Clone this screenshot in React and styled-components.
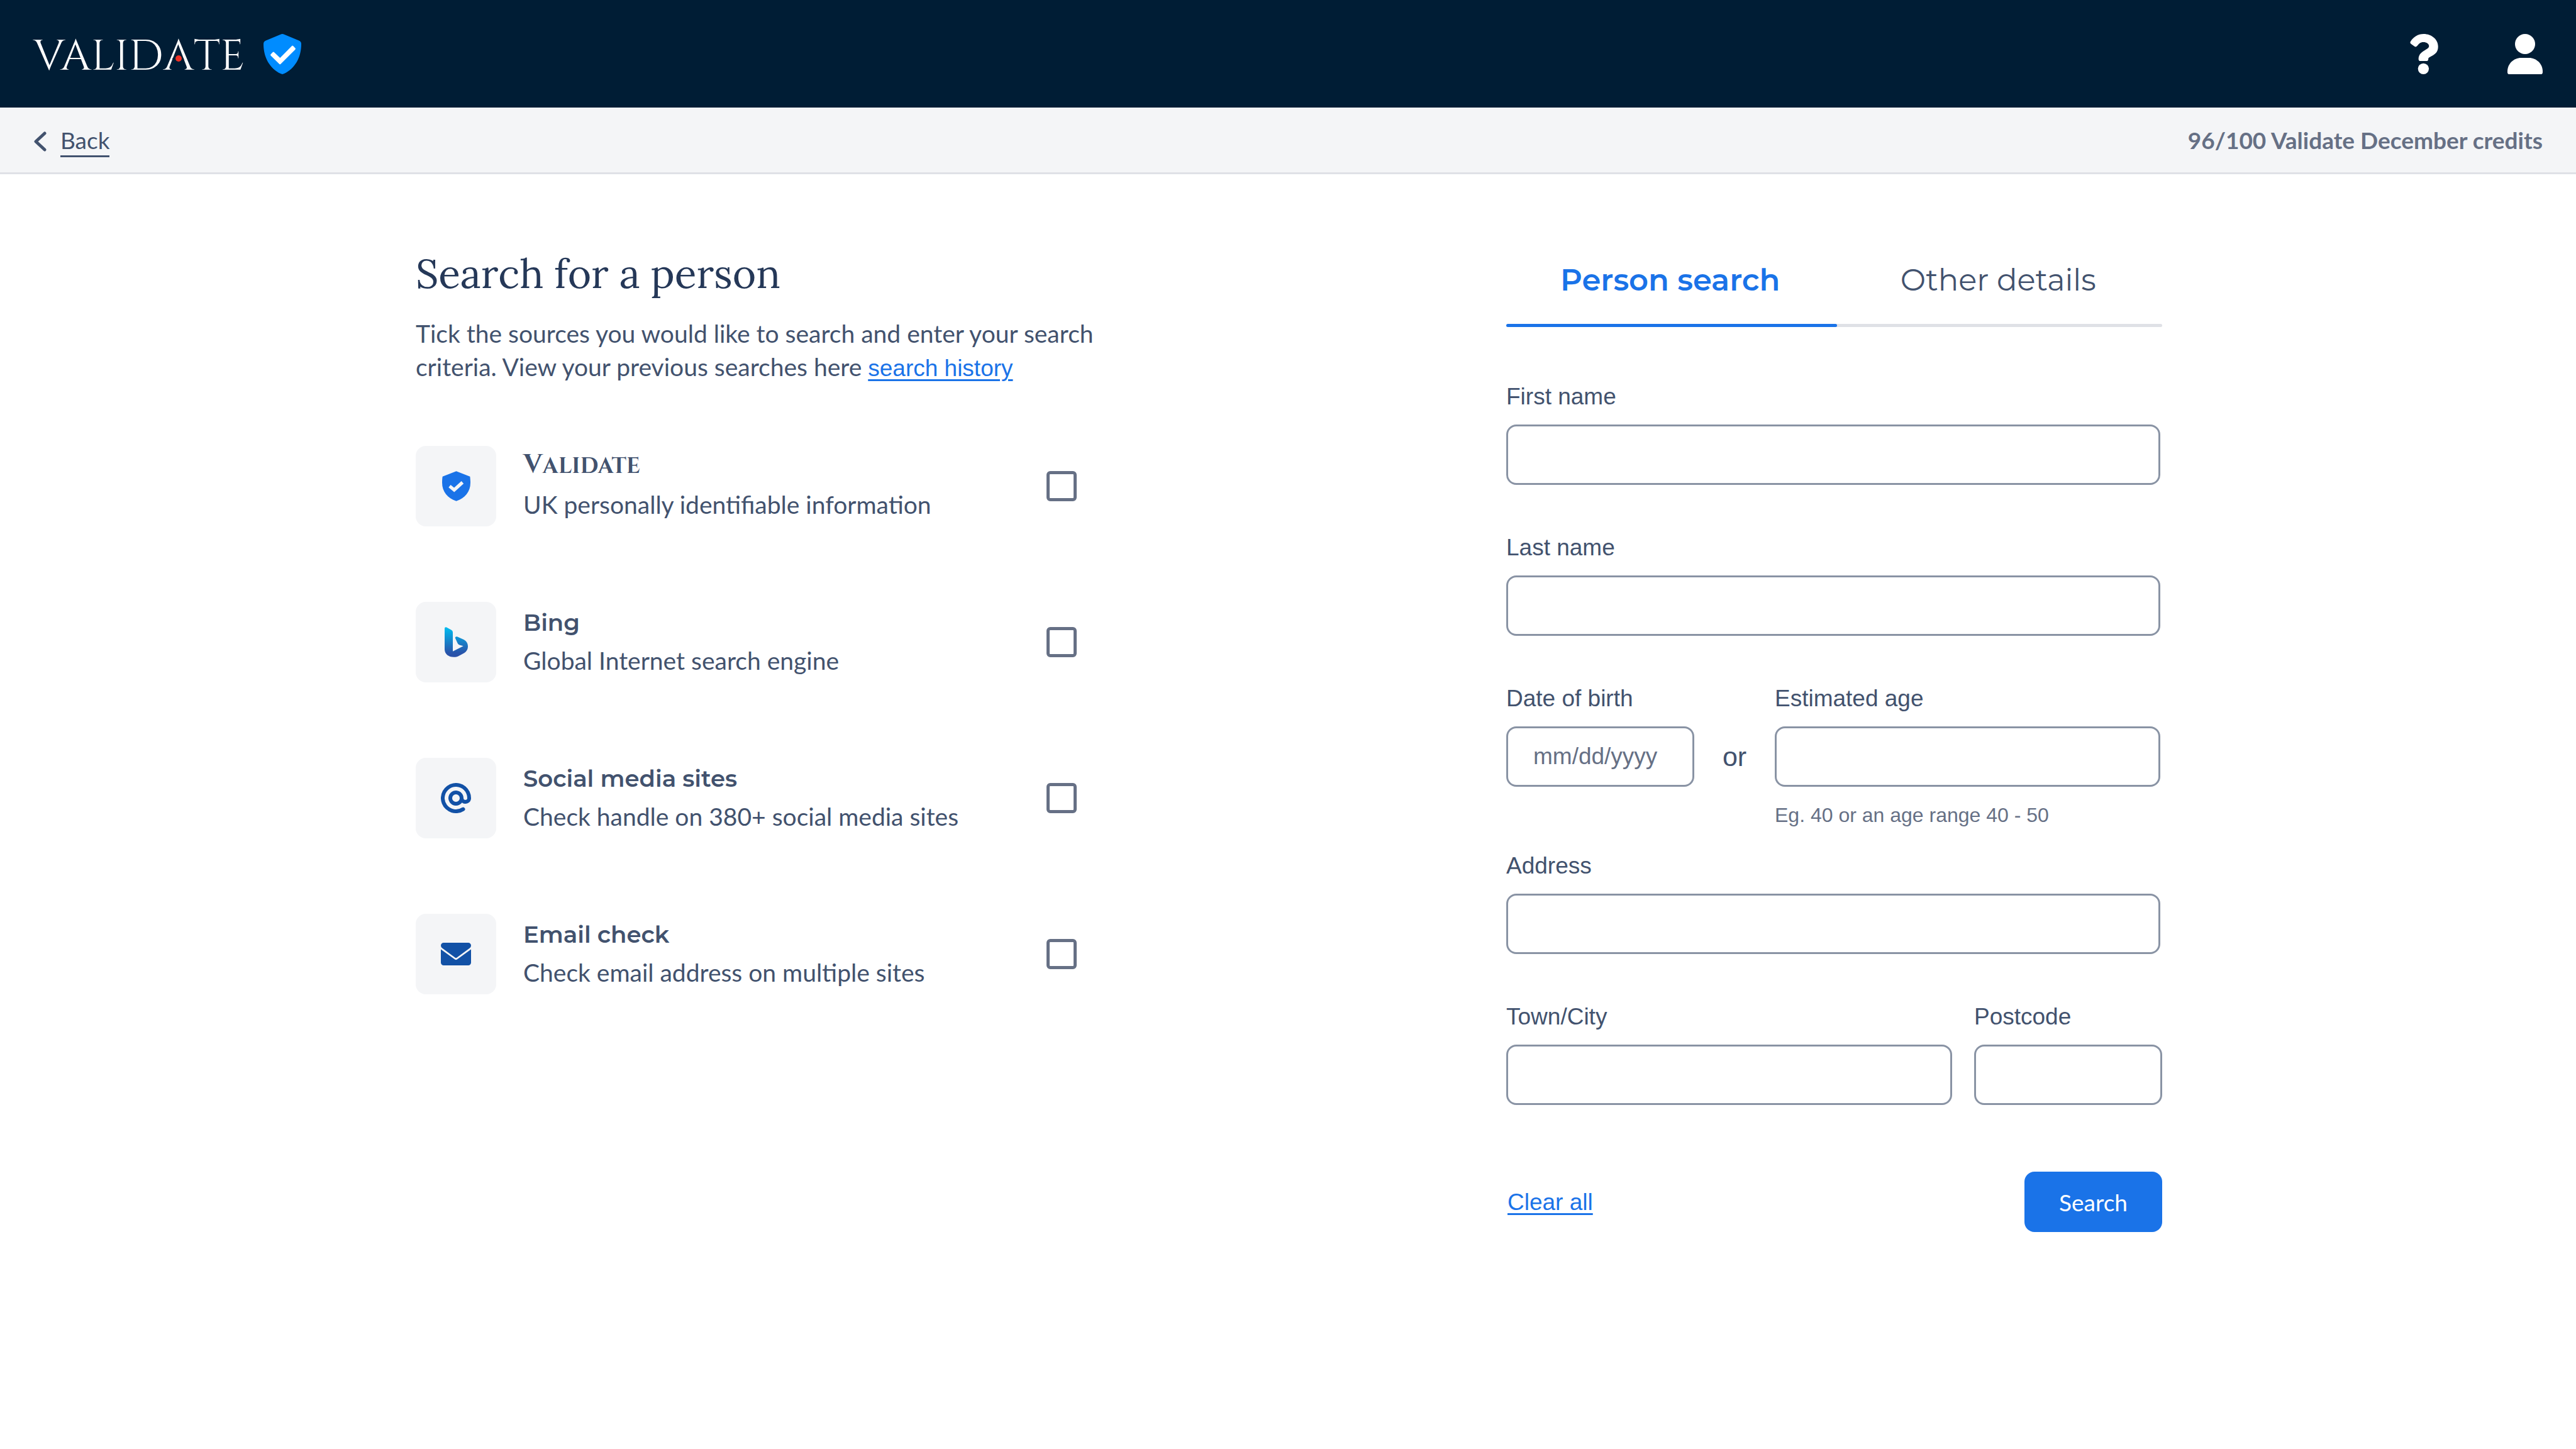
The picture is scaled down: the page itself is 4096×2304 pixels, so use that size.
import React from "react";
import styled, { createGlobalStyle } from "styled-components";

const color = {
  navy: "#001d35",
  heading: "#253858",
  text: "#42526e",
  muted: "#667085",
  border: "#8993a4",
  line: "#dfe1e6",
  surface: "#f4f5f7",
  blue: "#1a73e8",
  deepBlue: "#1251a6",
};

const font = {
  body: '"Lato", "Open Sans", sans-serif',
  ui: '"Liberation Sans", Arial, sans-serif',
  brand: '"Cinzel", "Liberation Serif", "Times New Roman", serif',
  heading: '"Lora", "Liberation Serif", serif',
  title: '"Montserrat", "Inter", sans-serif',
};

const GlobalStyle = createGlobalStyle`
  *, *::before, *::after { box-sizing: border-box; }
  body {
    margin: 0;
    background: #ffffff;
    color: ${color.text};
    font: 37px/53px ${font.body};
  }
  h1, h2, p { margin: 0; }
  button, input { font: inherit; color: inherit; }
  svg { display: block; }
`;

const Header = styled.header`
  display: flex;
  align-items: center;
  justify-content: space-between;
  height: 171px;
  padding: 0 53px;
  background: ${color.navy};
  color: #ffffff;
`;

const Brand = styled.a`
  display: flex;
  align-items: center;
  gap: 30px;
  color: inherit;
  text-decoration: none;
`;

const Wordmark = styled.span`
  padding-top: 10px;
  font: 500 68px/80px ${font.brand};
`;

/* The second A of the wordmark has a red dot in place of its crossbar. */
const DottedA = styled.span`
  position: relative;
  &::before {
    content: "";
    position: absolute;
    left: 14px;
    top: 47px;
    width: 19px;
    height: 4px;
    background: ${color.navy};
    clip-path: polygon(5% 0, 95% 0, 100% 100%, 0 100%);
  }
  &::after {
    content: "";
    position: absolute;
    left: 19px;
    top: 43px;
    width: 10px;
    height: 10px;
    border-radius: 50%;
    background: #ee3024;
  }
`;

const HeaderActions = styled.nav`
  display: flex;
  gap: 110px;
`;

const IconButton = styled.button`
  padding: 0;
  border: 0;
  background: none;
  cursor: pointer;
`;

const SubBar = styled.div`
  display: flex;
  align-items: center;
  justify-content: space-between;
  height: 106px;
  padding: 0 53px;
  background: ${color.surface};
  border-bottom: 3px solid ${color.line};
`;

const BackLink = styled.a`
  display: flex;
  align-items: center;
  gap: 22px;
  padding-top: 4px;
  color: ${color.text};
  text-decoration: none;
`;

const BackText = styled.span`
  line-height: 48px;
  border-bottom: 3px solid currentColor;
`;

const Credits = styled.strong`
  font-weight: 700;
  color: ${color.muted};
`;

const Main = styled.main`
  display: flex;
  justify-content: space-between;
  gap: 80px;
  max-width: 2780px;
  margin: 0 auto;
  padding: 118px 0 118px 3px;
`;

const Sources = styled.section`
  flex: 0 1 1088px;
  font-size: 39px;
`;

const Heading = styled.h1`
  margin-bottom: 29px;
  font: 400 64px/80px ${font.heading};
  color: ${color.heading};
`;

const TextLink = styled.a`
  font-family: ${font.ui};
  font-size: 37px;
  color: ${color.blue};
  text-decoration: underline;
  text-decoration-thickness: 3px;
  text-underline-offset: 5px;
`;

const SourceList = styled.ul`
  display: grid;
  gap: 120px;
  max-width: 1051px;
  margin: 97px 0 0;
  padding: 0;
  list-style: none;
`;

const SourceRow = styled.label`
  display: flex;
  align-items: center;
  gap: 43px;
  cursor: pointer;
`;

const Tile = styled.span`
  display: grid;
  place-items: center;
  flex: none;
  width: 128px;
  height: 128px;
  border-radius: 16px;
  background: ${color.surface};
`;

const SourceText = styled.span`
  display: grid;
  flex: 1;
  align-self: flex-start;
  gap: 8px;
  padding-top: 6px;
`;

const SourceName = styled.span`
  display: block;
  font: 600 37px/53px ${(p) => (p.$brand ? font.brand : font.title)};
  ${(p) =>
    p.$brand &&
    `
    font-size: 35px;
    &::first-letter {
      font-size: 42px;
      line-height: 40px;
    }
  `}
`;

const Checkbox = styled.input`
  appearance: none;
  flex: none;
  width: 48px;
  height: 48px;
  margin: 0;
  border: 5px solid ${color.muted};
  border-radius: 6px;
  background: #ffffff;
  &:checked { background: ${color.blue}; }
`;

const SearchPanel = styled.section`
  flex: 0 1 1043px;
`;

const TabList = styled.div`
  display: grid;
  grid-template-columns: 1fr 1fr;
  margin-bottom: 89px;
`;

const Tab = styled.button`
  position: relative;
  z-index: ${(p) => (p.$active ? 1 : 0)};
  padding: 22px 0 0;
  border: 0;
  background: none;
  font: ${(p) => (p.$active ? 600 : 400)} 48px/56px ${font.title};
  color: ${(p) => (p.$active ? color.blue : color.text)};
  cursor: pointer;
  &::after {
    content: "";
    display: block;
    height: 5px;
    margin-top: 42px;
    margin-right: ${(p) => (p.$active ? -4 : 0)}px;
    border-radius: ${(p) => (p.$active ? "3px" : "0 3px 3px 0")};
    background: ${(p) => (p.$active ? color.blue : color.line)};
  }
`;

const Form = styled.form`
  display: grid;
  gap: 40px;
  font-family: ${font.ui};
`;

const Row = styled.div`
  display: flex;
  align-items: flex-start;
  gap: ${(p) => p.$gap || 0}px;
  margin-right: ${(p) => (p.$inset ? 3 : 0)}px;
`;

const FieldBox = styled.div`
  display: flex;
  flex-direction: column;
  flex: ${(p) => (p.$width ? `0 0 ${p.$width}px` : "1")};
  min-width: 0;
  padding-bottom: ${(p) => (p.$hinted ? 0 : 38)}px;
`;

const Label = styled.label`
  margin-bottom: 22px;
  line-height: 44px;
`;

const TextInput = styled.input`
  width: 100%;
  height: 96px;
  padding: 0 40px;
  border: 3px solid ${color.border};
  border-radius: 16px;
  background: #ffffff;
  &::placeholder { color: ${color.muted}; opacity: 1; }
`;

const Hint = styled.p`
  margin-top: 26px;
  font-size: 32px;
  line-height: 38px;
  color: ${color.muted};
`;

const Or = styled.span`
  flex: 0 0 128px;
  padding-top: 66px;
  font-size: 43px;
  line-height: 96px;
  text-align: center;
`;

const Actions = styled.div`
  display: flex;
  align-items: center;
  justify-content: space-between;
  margin-top: 28px;
`;

const ClearButton = styled.button`
  padding: 0 2px;
  border: 0;
  background: none;
  color: ${color.blue};
  text-decoration: underline;
  text-decoration-thickness: 3px;
  text-underline-offset: 5px;
  cursor: pointer;
`;

const SubmitButton = styled.button`
  height: 96px;
  padding: 0 55px;
  border: 0;
  border-radius: 16px;
  background: ${color.blue};
  color: #ffffff;
  font-family: ${font.body};
  cursor: pointer;
`;

const BrandShield = () => (
  <svg width="60" height="64" viewBox="0 0 270 288" aria-hidden="true">
    <path
      fill="#008cff"
      d="M122 3Q135-3 148 3L256 48Q270 55 270 72C270 168 226 246 148 284Q135 291 122 284C44 246 0 168 0 72Q0 55 14 48Z"
    />
    <path
      fill="#fff"
      stroke="#fff"
      strokeWidth="14"
      strokeLinejoin="round"
      d="M71 136 118 181 207 91 222 106 118 210 57 150Z"
    />
  </svg>
);

const QuestionIcon = () => (
  <svg width="45" height="64" viewBox="0 0 200 288" fill="#fff" aria-hidden="true">
    <path d="M3 54C24 20 56 0 97 0 152 0 200 38 200 90 200 125 184 142 155 158 136 168 130 171 130 180Q130 194 116 194H74Q60 194 60 180C60 146 84 129 108 115 128 103 135 97 135 86 135 70 117 58 95 58 72 58 62 70 50 86Q41 97 31 89L6 71Q-3 64 3 54Z" />
    <circle cx="95" cy="249" r="39" />
  </svg>
);

const UserIcon = () => (
  <svg width="56" height="64" viewBox="0 0 252 288" fill="#fff" aria-hidden="true">
    <circle cx="126" cy="72" r="72" />
    <path d="M0 268C0 214 44 171 98 171H154C208 171 252 214 252 268V274Q252 288 238 288H14Q0 288 0 274Z" />
  </svg>
);

const ChevronIcon = () => (
  <svg width="21" height="32" viewBox="0 0 21 32" fill="none" aria-hidden="true">
    <path d="M18 3 4 16 18 29" stroke={color.text} strokeWidth="5" strokeLinecap="round" strokeLinejoin="round" />
  </svg>
);

const ShieldIcon = () => (
  <svg width="45" height="48" viewBox="0 0 68 72" aria-hidden="true">
    <path fill={color.blue} d="M34 0 67 13Q68 20 68 28C68 49 55 65 34 72 13 65 0 49 0 28Q0 20 1 13Z" />
    <path d="M18 36 29 45 49 27" fill="none" stroke={color.surface} strokeWidth="8" />
  </svg>
);

const BingIcon = () => (
  <svg width="37" height="48" viewBox="0 0 168 216" aria-hidden="true">
    <defs>
      <linearGradient id="bing-fill" x1="0" y1="0" x2="0" y2="1">
        <stop offset="0" stopColor="#00bdf0" />
        <stop offset="0.85" stopColor="#2855ab" />
        <stop offset="1" stopColor="#2b50a8" />
      </linearGradient>
    </defs>
    <path
      fill="url(#bing-fill)"
      d="M0 8Q0-2 14 1L49 21Q59 27 59 38V175L135 136 107 128Q98 125 94 117L77 80Q73 66 90 68L138 90C158 101 168 118 168 140 168 160 159 175 142 186L100 209C90 214 80 216 66 216 28 216 0 193 0 160Z"
    />
  </svg>
);

const AtIcon = () => (
  <svg width="48" height="48" viewBox="2 2 16 16" fill={color.deepBlue} aria-hidden="true">
    <path
      fillRule="evenodd"
      clipRule="evenodd"
      d="M14.243 5.757a6 6 0 10-.986 9.284 1 1 0 111.087 1.678A8 8 0 1118 10a3 3 0 01-4.8 2.401A4 4 0 1114 10a1 1 0 102 0c0-1.537-.586-3.07-1.757-4.243zM12 10a2 2 0 10-4 0 2 2 0 004 0z"
    />
  </svg>
);

const MailIcon = () => (
  <svg width="48" height="36" viewBox="0 0 16 12" fill={color.deepBlue} aria-hidden="true">
    <path d="M1.500 0H14.500A1.500 1.500 0 0 1 16 1.500Q16 2.300 15.300 2.800L8.400 7.900Q8 8.200 7.600 7.900L.7 2.800Q0 2.300 0 1.500A1.500 1.500 0 0 1 1.500 0Z" />
    <path d="M0 3.500 7.500 8.900Q8 9.200 8.500 8.900L16 3.500V10.500A1.500 1.500 0 0 1 14.500 12H1.500A1.500 1.500 0 0 1 0 10.500Z" />
  </svg>
);

const sources = [
  { id: "validate", name: "VALIDATE", brand: true, detail: "UK personally identifiable information", Icon: ShieldIcon },
  { id: "bing", name: "Bing", detail: "Global Internet search engine", Icon: BingIcon },
  { id: "social", name: "Social media sites", detail: "Check handle on 380+ social media sites", Icon: AtIcon },
  { id: "email", name: "Email check", detail: "Check email address on multiple sites", Icon: MailIcon },
];

function Field({ id, label, width, hint, placeholder }) {
  return (
    <FieldBox $width={width} $hinted={Boolean(hint)}>
      <Label htmlFor={id}>{label}</Label>
      <TextInput id={id} name={id} type="text" placeholder={placeholder} />
      {hint && <Hint>{hint}</Hint>}
    </FieldBox>
  );
}

export default function App() {
  return (
    <>
      <GlobalStyle />
      <Header>
        <Brand href="#home">
          <Wordmark>
            VALID<DottedA>A</DottedA>TE
          </Wordmark>
          <BrandShield />
        </Brand>
        <HeaderActions>
          <IconButton type="button" aria-label="Help">
            <QuestionIcon />
          </IconButton>
          <IconButton type="button" aria-label="Account">
            <UserIcon />
          </IconButton>
        </HeaderActions>
      </Header>
      <SubBar>
        <BackLink href="#back">
          <ChevronIcon />
          <BackText>Back</BackText>
        </BackLink>
        <Credits>96/100 Validate December credits</Credits>
      </SubBar>
      <Main>
        <Sources>
          <Heading>Search for a person</Heading>
          <p>
            Tick the sources you would like to search and enter your search criteria. View your previous
            searches here <TextLink href="#history">search history</TextLink>
          </p>
          <SourceList>
            {sources.map(({ id, name, brand, detail, Icon }) => (
              <li key={id}>
                <SourceRow htmlFor={id}>
                  <Tile>
                    <Icon />
                  </Tile>
                  <SourceText>
                    <SourceName $brand={brand}>{name}</SourceName>
                    <span>{detail}</span>
                  </SourceText>
                  <Checkbox type="checkbox" id={id} />
                </SourceRow>
              </li>
            ))}
          </SourceList>
        </Sources>
        <SearchPanel>
          <TabList role="tablist">
            <Tab type="button" role="tab" aria-selected="true" $active>
              Person search
            </Tab>
            <Tab type="button" role="tab" aria-selected="false">
              Other details
            </Tab>
          </TabList>
          <Form>
            <Row $inset>
              <Field id="first-name" label="First name" />
            </Row>
            <Row $inset>
              <Field id="last-name" label="Last name" />
            </Row>
            <Row $inset>
              <Field id="dob" label="Date of birth" width={299} placeholder="mm/dd/yyyy" />
              <Or>or</Or>
              <Field id="age" label="Estimated age" hint="Eg. 40 or an age range 40 - 50" />
            </Row>
            <Row $inset>
              <Field id="address" label="Address" />
            </Row>
            <Row $gap={35}>
              <Field id="town" label="Town/City" />
              <Field id="postcode" label="Postcode" width={299} />
            </Row>
            <Actions>
              <ClearButton type="reset">Clear all</ClearButton>
              <SubmitButton type="button">Search</SubmitButton>
            </Actions>
          </Form>
        </SearchPanel>
      </Main>
    </>
  );
}
